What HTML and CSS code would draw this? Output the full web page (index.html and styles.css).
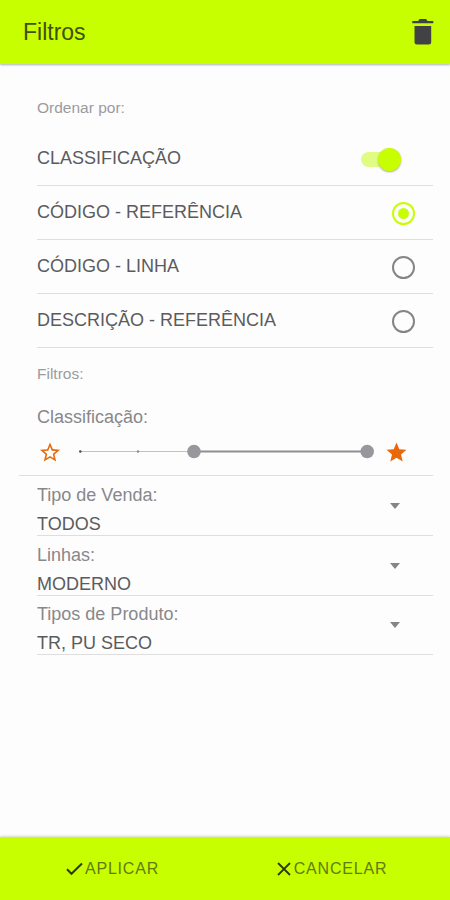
FILE: index.html
```html
<!DOCTYPE html>
<html lang="pt-BR">
<head>
<meta charset="utf-8">
<meta name="viewport" content="width=device-width, initial-scale=1">
<title>Filtros</title>
<link rel="stylesheet" href="styles.css">
</head>
<body>
<header class="topbar">
  <h1>Filtros</h1>
  <button class="trash" aria-label="Limpar">
    <svg width="22" height="26" viewBox="0 0 22 26" fill="#424245"><path d="M2.5 7h16.7v16a2.5 2.5 0 0 1-2.5 2.5H5A2.5 2.5 0 0 1 2.5 23z"/><path d="M7.5 0h6.7l1.3 2h5.8v2.2H0.3V2h5.9z"/></svg>
  </button>
</header>
<main>
  <h2>Ordenar por:</h2>
  <section class="orders">
    <div class="option"><span>CLASSIFICAÇÃO</span><i class="toggle"></i></div>
    <div class="option"><span>CÓDIGO - REFERÊNCIA</span><i class="radio checked"></i></div>
    <div class="option"><span>CÓDIGO - LINHA</span><i class="radio"></i></div>
    <div class="option"><span>DESCRIÇÃO - REFERÊNCIA</span><i class="radio"></i></div>
  </section>
  <h2 class="second">Filtros:</h2>
  <section class="rating">
    <span class="label">Classificação:</span>
    <div class="range">
      <svg class="star" width="20" height="20" viewBox="2 1.5 20 20" fill="#e8690b"><path d="M22 9.24l-7.19-.62L12 2 9.19 8.63 2 9.24l5.46 4.73L5.82 21 12 17.27 18.18 21l-1.63-7.03L22 9.24zM12 15.4l-3.76 2.27 1-4.28-3.32-2.88 4.38-.38L12 6.1l1.71 4.04 4.38.38-3.32 2.88 1 4.28L12 15.4z"/></svg>
      <svg class="slider" width="296" height="16" viewBox="79 0 296 16"><path d="M80 7.5H194" stroke="#c3c3c5"/><path d="M194 7.5H367" stroke="#8e8e94" stroke-width="1.8"/><circle cx="80.3" cy="7.5" r="1.2" fill="#444"/><circle cx="138" cy="7.5" r="1.2" fill="#888"/><circle cx="194" cy="7.5" r="6.8" fill="#97979c"/><circle cx="367.2" cy="7.5" r="6.8" fill="#97979c"/></svg>
      <svg class="star" width="20" height="20" viewBox="1.5 1.5 20 20" fill="#e8690b"><path d="M12 17.27L18.18 21l-1.64-7.03L22 9.24l-7.19-.61L12 2 9.19 8.63 2 9.24l5.46 4.73L5.82 21z"/></svg>
    </div>
  </section>
  <section class="selects">
    <div class="select"><div><span class="label">Tipo de Venda:</span><span class="value">TODOS</span></div><i class="caret"></i></div>
    <div class="select"><div><span class="label">Linhas:</span><span class="value">MODERNO</span></div><i class="caret"></i></div>
    <div class="select"><div><span class="label">Tipos de Produto:</span><span class="value">TR, PU SECO</span></div><i class="caret"></i></div>
  </section>
</main>
<footer>
  <button class="action"><svg width="17" height="14" viewBox="0 0 17 14" fill="none" stroke="#2d3908" stroke-width="2"><path d="M1 7.2l4.5 4.6L16 1.5"/></svg><span>APLICAR</span></button>
  <button class="action cancel"><svg width="14" height="14" viewBox="0 0 14 14" fill="none" stroke="#2d3908" stroke-width="1.8"><path d="M1 1l12 12M13 1L1 13"/></svg><span>CANCELAR</span></button>
</footer>
</body>
</html>
```
FILE: styles.css
```css
* { box-sizing: border-box; }
body {
  margin: 0;
  height: 900px;
  display: flex;
  flex-direction: column;
  background: #fdfdfd;
  color: #5b5b5e;
  font: 18px/20px "Liberation Sans", Arial, sans-serif;
  overflow: hidden;
}
button { border: 0; padding: 0; background: none; font: inherit; color: inherit; }
.topbar {
  flex: none;
  height: 64px;
  padding: 0 16px 0 23px;
  display: flex;
  align-items: center;
  justify-content: space-between;
  background: #c8ff00;
  box-shadow: 0 1px 2px #a9b3b8;
}
h1 { margin: 0; font-size: 23px; line-height: 26px; font-weight: 400; color: #40500c; }
.trash { height: 26px; }
.trash svg, .range svg, .action svg { display: block; }
main { flex: 1; padding: 34px 17px 0 37px; }
h2 { margin: 0; font-size: 15.5px; line-height: 20px; font-weight: 400; color: #9b9b9f; }
.orders { padding-top: 14px; }
.option {
  height: 54px;
  padding: 1px 18px 0 0;
  border-bottom: 1px solid #dedede;
  display: flex;
  align-items: center;
  justify-content: space-between;
}
.option span { padding-bottom: 2px; }
.toggle {
  width: 40px;
  height: 15px;
  margin-right: 14px;
  border-radius: 8px;
  background: #e1fc83;
  display: flex;
  align-items: center;
  justify-content: flex-end;
}
.toggle::after {
  content: "";
  flex: none;
  width: 23px;
  height: 23px;
  border-radius: 50%;
  background: #c8ff00;
  box-shadow: 0 1px 2px #aaa;
}
.radio {
  width: 23px;
  height: 23px;
  border: 2px solid #858585;
  border-radius: 50%;
  display: grid;
  place-items: center;
}
.checked { border-color: #c8ff00; }
.checked::after { content: ""; width: 11px; height: 11px; border-radius: 50%; background: #c8ff00; }
.second { margin-top: 16px; }
.rating {
  height: 92px;
  margin-left: -18px;
  padding: 23px 0 0 18px;
  border-bottom: 1px solid #dedede;
}
.label, .value { display: block; }
.label { color: #88888b; }
.range { display: flex; align-items: center; margin-top: 15px; padding-left: 3px; }
.range .slider { margin: 0 11px 0 19px; }
.select {
  height: 60px;
  padding: 9px 33px 0 0;
  border-bottom: 1px solid #dedede;
  display: flex;
  align-items: flex-start;
  justify-content: space-between;
}
.select + .select { height: 59.7px; padding-top: 8.7px; }
.select .value { margin-top: 9px; }
.caret { margin-top: 18px; border: 5px solid transparent; border-top: 6px solid #858585; border-bottom: 0; }
footer {
  flex: none;
  height: 63px;
  display: grid;
  grid-template-columns: 1fr 1fr;
  background: #c8ff00;
  box-shadow: 0 -1px 2px #d4dcc8;
}
.action {
  display: flex;
  align-items: center;
  justify-content: center;
  gap: 2px;
  font-size: 16px;
  letter-spacing: 0.8px;
  color: #627a13;
}
.cancel { gap: 3px; padding-right: 11px; }
```
